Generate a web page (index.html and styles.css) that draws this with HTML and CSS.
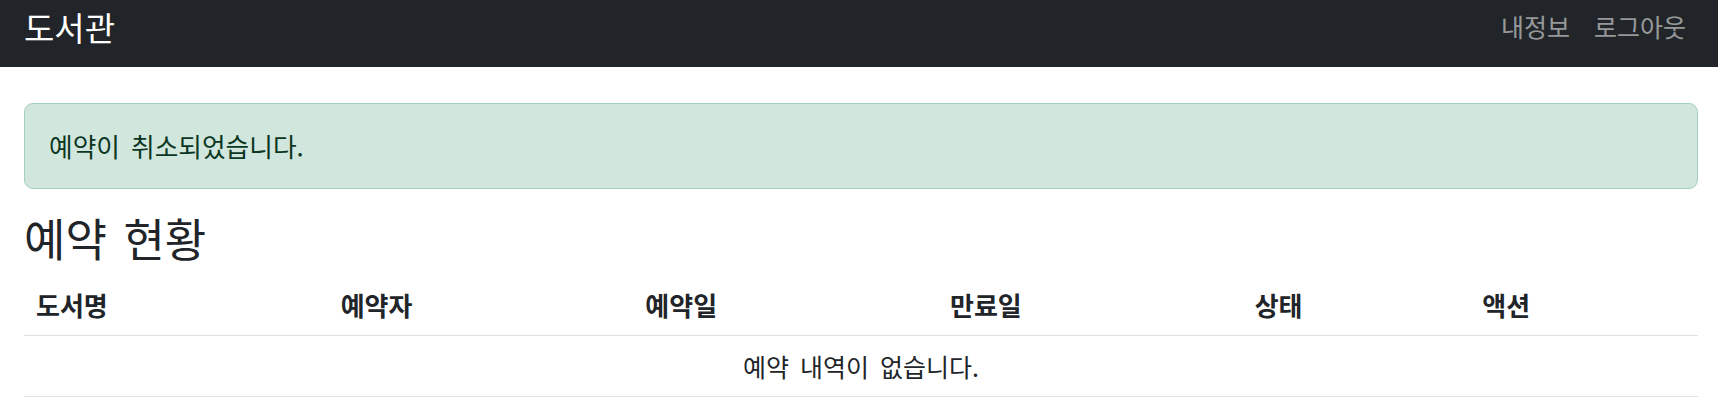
FILE: index.html
```html
<!DOCTYPE html>
<html lang="ko">
<head>
<meta charset="utf-8">
<title>도서관</title>
<link rel="stylesheet" href="styles.css">
</head>
<body>
<nav class="navbar">
  <a class="brand" href="#">도서관</a>
  <ul class="nav">
    <li><a class="nav-link" href="#">내정보</a></li>
    <li><a class="nav-link" href="#">로그아웃</a></li>
  </ul>
</nav>
<main class="content">
  <div class="alert">예약이 취소되었습니다.</div>
  <h2 class="title">예약 현황</h2>
  <table class="table">
    <thead>
      <tr>
        <th class="col-wide">도서명</th>
        <th class="col-wide">예약자</th>
        <th class="col-wide">예약일</th>
        <th class="col-wide">만료일</th>
        <th class="col-narrow">상태</th>
        <th class="col-narrow">액션</th>
      </tr>
    </thead>
    <tbody>
      <tr>
        <td class="empty" colspan="6">예약 내역이 없습니다.</td>
      </tr>
    </tbody>
  </table>
</main>
</body>
</html>
```
FILE: styles.css
```css
* { box-sizing: border-box; }

html, body {
  margin: 0;
  padding: 0;
  background: #ffffff;
}

body {
  font-family: "Noto Sans CJK KR", "Noto Sans", sans-serif;
  font-size: 25px;
  line-height: 36px;
  word-spacing: 4px;
  color: #212529;
}

.navbar {
  height: 67px;
  background: #212529;
  display: flex;
  align-items: center;
  justify-content: space-between;
  padding: 0 20px 13px 24px;
}

.brand {
  font-size: 33px;
  line-height: 45px;
  color: #ffffff;
  text-decoration: none;
}

.nav {
  list-style: none;
  margin: 0 0 3px 0;
  padding: 0;
  display: flex;
}

.nav-link {
  display: block;
  padding: 0 12px;
  font-size: 25px;
  line-height: 36px;
  color: rgba(255, 255, 255, 0.55);
  text-decoration: none;
}

.content {
  padding: 36px 20px 0 24px;
}

.alert {
  background: #d1e7dd;
  border: 1px solid #a3cfbb;
  border-radius: 9px;
  color: #0a3622;
  padding: 24px;
  font-size: 25.7px;
  line-height: 36px;
  margin-bottom: 24px;
}

.title {
  font-size: 45px;
  font-weight: 400;
  line-height: 50px;
  margin: 0 0 12px 0;
}

.table {
  width: 100%;
  border-collapse: collapse;
  table-layout: fixed;
}

.table th {
  text-align: left;
  font-weight: 700;
  font-size: 26px;
  padding: 12px;
  border-bottom: 1px solid #dee2e6;
}

.col-wide { width: 18.2%; }
.col-narrow { width: 13.6%; }

.table td {
  padding: 12px;
  border-bottom: 1px solid #dee2e6;
}

.empty {
  text-align: center;
}
```
